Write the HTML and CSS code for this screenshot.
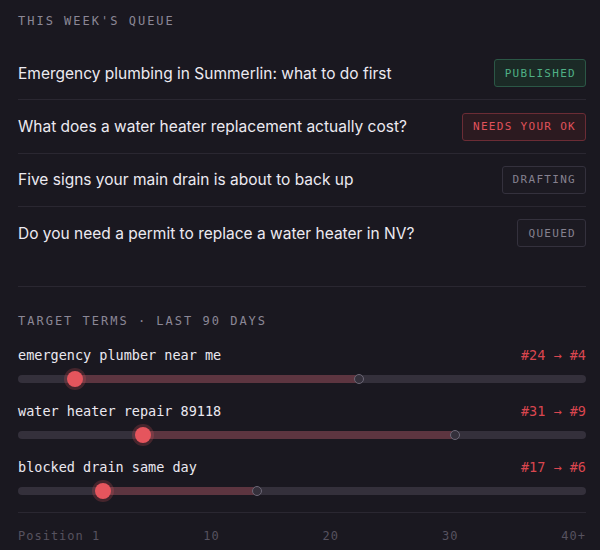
FILE: index.html
```html
<!DOCTYPE html>
<html lang="en">
<head>
<meta charset="utf-8">
<title>Queue</title>
<link rel="stylesheet" href="styles.css">
</head>
<body>
<main class="panel">
  <section class="queue">
    <h2 class="eyebrow">This week's queue</h2>
    <ul class="posts">
      <li class="post"><span class="post-title">Emergency plumbing in Summerlin: what to do first</span><span class="badge badge-published">Published</span></li>
      <li class="post"><span class="post-title">What does a water heater replacement actually cost?</span><span class="badge badge-needs">Needs your OK</span></li>
      <li class="post"><span class="post-title">Five signs your main drain is about to back up</span><span class="badge">Drafting</span></li>
      <li class="post"><span class="post-title">Do you need a permit to replace a water heater in NV?</span><span class="badge">Queued</span></li>
    </ul>
  </section>
  <section class="terms">
    <h2 class="eyebrow">Target terms · last 90 days</h2>
    <div class="term">
      <div class="term-head"><span class="term-name">emergency plumber near me</span><span class="term-rank">#24 → #4</span></div>
      <div class="track"><div class="track-bar"><span class="fill" style="--now:10%;--was:60%"></span><span class="was" style="--was:60%"></span><span class="now" style="--now:10%"></span></div></div>
    </div>
    <div class="term">
      <div class="term-head"><span class="term-name">water heater repair 89118</span><span class="term-rank">#31 → #9</span></div>
      <div class="track"><div class="track-bar"><span class="fill" style="--now:22%;--was:77%"></span><span class="was" style="--was:77%"></span><span class="now" style="--now:22%"></span></div></div>
    </div>
    <div class="term">
      <div class="term-head"><span class="term-name">blocked drain same day</span><span class="term-rank">#17 → #6</span></div>
      <div class="track"><div class="track-bar"><span class="fill" style="--now:15%;--was:42%"></span><span class="was" style="--was:42%"></span><span class="now" style="--now:15%"></span></div></div>
    </div>
    <div class="scale">
      <span>Position 1</span><span>10</span><span>20</span><span>30</span><span>40+</span>
    </div>
  </section>
</main>
</body>
</html>
```

FILE: styles.css
```css
* { box-sizing: border-box; }
html, body { margin: 0; padding: 0; background: #1a1820; }
body { width: 600px; height: 550px; overflow: hidden; }

.panel {
  padding: 13px 14px 0 18px;
  color: #ebe8f0;
  font-family: Inter, "Noto Sans", sans-serif;
}

.eyebrow {
  margin: 0;
  font-family: "DejaVu Sans Mono", monospace;
  font-size: 12px;
  line-height: 16px;
  font-weight: normal;
  letter-spacing: 2px;
  text-transform: uppercase;
  color: #8b8796;
}

.posts {
  list-style: none;
  margin: 18px 0 0;
  padding: 0;
}

.post {
  display: flex;
  align-items: center;
  justify-content: space-between;
  padding: 12.2px 0;
  border-bottom: 1px solid #2a2731;
}
.post:last-child { border-bottom: none; }

.post-title {
  font-size: 15.5px;
  color: #eceaf1;
}

.badge {
  display: inline-flex;
  align-items: center;
  height: 28px;
  padding: 0 9px 0 10px;
  border: 1px solid #34313d;
  border-radius: 3px;
  font-family: "DejaVu Sans Mono", monospace;
  font-size: 11px;
  letter-spacing: 1.3px;
  text-transform: uppercase;
  color: #85818f;
  background: #1c1a22;
}
.badge-published {
  color: #4fb085;
  border-color: #2b5746;
  background: #1b2a26;
}
.badge-needs {
  color: #e0525b;
  border-color: #6b2c35;
  background: #2c1a20;
}

.terms {
  margin-top: 26px;
  padding-top: 26px;
  border-top: 1px solid #2a2731;
}

.term { margin-top: 17px; }
.term + .term { margin-top: 12px; }

.term-head {
  display: flex;
  justify-content: space-between;
  align-items: center;
  font-family: "DejaVu Sans Mono", monospace;
  font-size: 13.5px;
  line-height: 18px;
}
.term-name { color: #ebe8f0; }
.term-rank { color: #d9464f; }

.track {
  margin-top: 4px;
  height: 22px;
  display: flex;
  align-items: center;
}
.track-bar {
  position: relative;
  width: 100%;
  height: 8px;
  border-radius: 4px;
  background: #34303b;
}
.fill {
  position: absolute;
  top: 0;
  bottom: 0;
  left: var(--now);
  width: calc(var(--was) - var(--now));
  background: #5d3540;
}
.now {
  position: absolute;
  top: 50%;
  left: var(--now);
  width: 16px;
  height: 16px;
  margin: -8px 0 0 -8px;
  border-radius: 50%;
  background: #e5555d;
  box-shadow: 0 0 0 3px rgba(229, 85, 93, 0.22);
}
.was {
  position: absolute;
  top: 50%;
  left: var(--was);
  width: 10px;
  height: 10px;
  margin: -5px 0 0 -5px;
  border-radius: 50%;
  border: 1.5px solid #6c6776;
  background: #34303b;
}

.scale {
  margin-top: 10px;
  padding-top: 15px;
  border-top: 1px solid #2a2731;
  display: flex;
  justify-content: space-between;
  font-family: "DejaVu Sans Mono", monospace;
  font-size: 12px;
  line-height: 16px;
  letter-spacing: 1px;
  color: #56525f;
}
```
